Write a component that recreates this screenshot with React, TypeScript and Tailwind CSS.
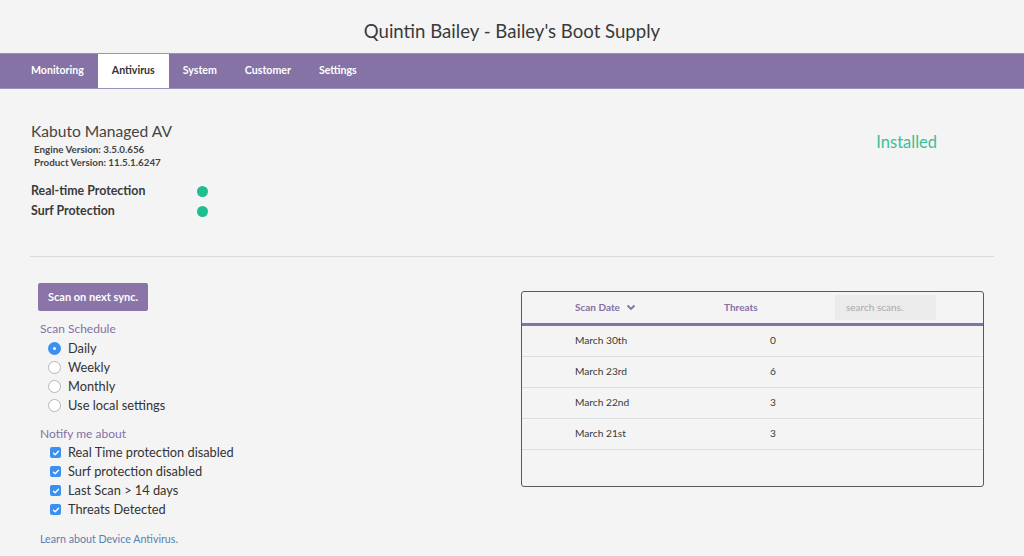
import React from "react";

const tabs = ["Monitoring", "Antivirus", "System", "Customer", "Settings"];

const scans = [
  { date: "March 30th", threats: 0 },
  { date: "March 23rd", threats: 6 },
  { date: "March 22nd", threats: 3 },
  { date: "March 21st", threats: 3 },
];

const schedule = ["Daily", "Weekly", "Monthly", "Use local settings"];
const notify = ["Real Time protection disabled", "Surf protection disabled", "Last Scan > 14 days", "Threats Detected"];

function Radio({ checked }: { checked: boolean }) {
  return checked ? (
    <span className="w-[13px] h-[13px] rounded-full bg-[#3b8ff0] flex items-center justify-center">
      <span className="w-[3px] h-[3px] rounded-full bg-white" />
    </span>
  ) : (
    <span className="w-[13px] h-[13px] rounded-full border border-[#b5b5b5] bg-white" />
  );
}

function Check() {
  return (
    <span className="w-[11px] h-[11px] rounded-[2px] bg-[#3b8ff0] flex items-center justify-center">
      <svg width="8" height="8" viewBox="0 0 8 8">
        <path d="M1.5 4.2 L3.2 5.8 L6.5 2.2" fill="none" stroke="white" strokeWidth="1.4" strokeLinecap="round" strokeLinejoin="round" />
      </svg>
    </span>
  );
}

export default function App() {
  return (
    <div className="w-[1024px] h-[556px] bg-[#f4f4f4] overflow-hidden text-[#333] font-['Lato',sans-serif]">
      {/* Title */}
      <div className="h-[53px] flex items-center justify-center pt-[10px]">
        <h1 className="text-[18.6px] text-[#3a3a3a]">Quintin Bailey - Bailey's Boot Supply</h1>
      </div>

      {/* Nav */}
      <div className="h-[36px] bg-[#8573a5] border-y border-[#9d8fba] flex items-stretch pl-[17px]">
        {tabs.map((t) =>
          t === "Antivirus" ? (
            <div key={t} className="bg-white text-[#333] text-[10.6px] font-bold px-[14px] flex items-center">
              {t}
            </div>
          ) : (
            <div key={t} className="text-white text-[10.6px] font-bold px-[14px] flex items-center">
              {t}
            </div>
          )
        )}
      </div>

      {/* AV info */}
      <div className="px-[31px] pt-[32px] flex justify-between">
        <div>
          <div className="text-[15.6px] text-[#444] leading-[20px]">Kabuto Managed AV</div>
          <div className="pl-[3px] mt-[2px] text-[9.8px] font-bold text-[#444] leading-[13px]">
            <div>Engine Version: 3.5.0.656</div>
            <div>Product Version: 11.5.1.6247</div>
          </div>
          <div className="mt-[15px] flex flex-col gap-[6px]">
            {["Real-time Protection", "Surf Protection"].map((p) => (
              <div key={p} className="flex items-center h-[14px]">
                <span className="w-[166px] text-[12.4px] font-bold text-[#3a3a3a]">{p}</span>
                <span className="w-[11px] h-[11px] rounded-full bg-[#1fbd8f]" />
              </div>
            ))}
          </div>
        </div>
        <div className="pr-[56px] pt-[9px] text-[16.5px] text-[#3dbf97]">Installed</div>
      </div>

      <div className="mx-[30px] mt-[38px] border-t border-[#dcdcdc]" />

      {/* Bottom */}
      <div className="flex pl-[38px] pt-[26px]">
        <div className="w-[483px]">
          <button className="h-[28px] px-[10px] bg-[#8a74a8] text-white text-[11px] font-bold rounded-[2px]">
            Scan on next sync.
          </button>
          <div className="pl-[2px] mt-[11px] text-[12px] text-[#8570a5] leading-[14px]">Scan Schedule</div>
          <div className="mt-[3px] pl-[10px] flex flex-col">
            {schedule.map((s, i) => (
              <label key={s} className="h-[19px] flex items-center gap-[7px] text-[12.8px] text-[#333]">
                <Radio checked={i === 0} />
                {s}
              </label>
            ))}
          </div>
          <div className="pl-[2px] mt-[12px] text-[12px] text-[#8570a5] leading-[14px]">Notify me about</div>
          <div className="mt-[2px] pl-[12px] flex flex-col">
            {notify.map((n) => (
              <label key={n} className="h-[19px] flex items-center gap-[7px] text-[12.8px] text-[#333]">
                <Check />
                {n}
              </label>
            ))}
          </div>
          <div className="pl-[2px] mt-[12px] text-[10.7px] text-[#5a7fae]">Learn about Device Antivirus.</div>
        </div>

        {/* Table */}
        <div className="mt-[8px] w-[463px] h-[196px] border border-[#5a5a5a] rounded-[3px] overflow-hidden">
          <div className="h-[34px] flex items-center border-b-[3px] border-[#8573a5] text-[10px] font-bold text-[#8570a5]">
            <div className="pl-[53px] w-[202px] flex items-center gap-[6px]">
              Scan Date
              <svg width="10" height="7" viewBox="0 0 10 7">
                <path d="M1.5 1.5 L5 5 L8.5 1.5" fill="none" stroke="#8570a5" strokeWidth="1.8" />
              </svg>
            </div>
            <div className="w-[111px]">Threats</div>
            <div className="w-[101px] h-[25px] bg-[#ebebeb] flex items-center px-[11px] text-[#aaa] font-normal">
              search scans.
            </div>
          </div>
          {scans.map((s) => (
            <div key={s.date} className="h-[31px] flex items-center border-b border-[#dedede] text-[10.2px] text-[#3a3a3a]">
              <div className="pl-[53px] w-[202px]">{s.date}</div>
              <div className="w-[52px] text-right">{s.threats}</div>
            </div>
          ))}
        </div>
      </div>
    </div>
  );
}
